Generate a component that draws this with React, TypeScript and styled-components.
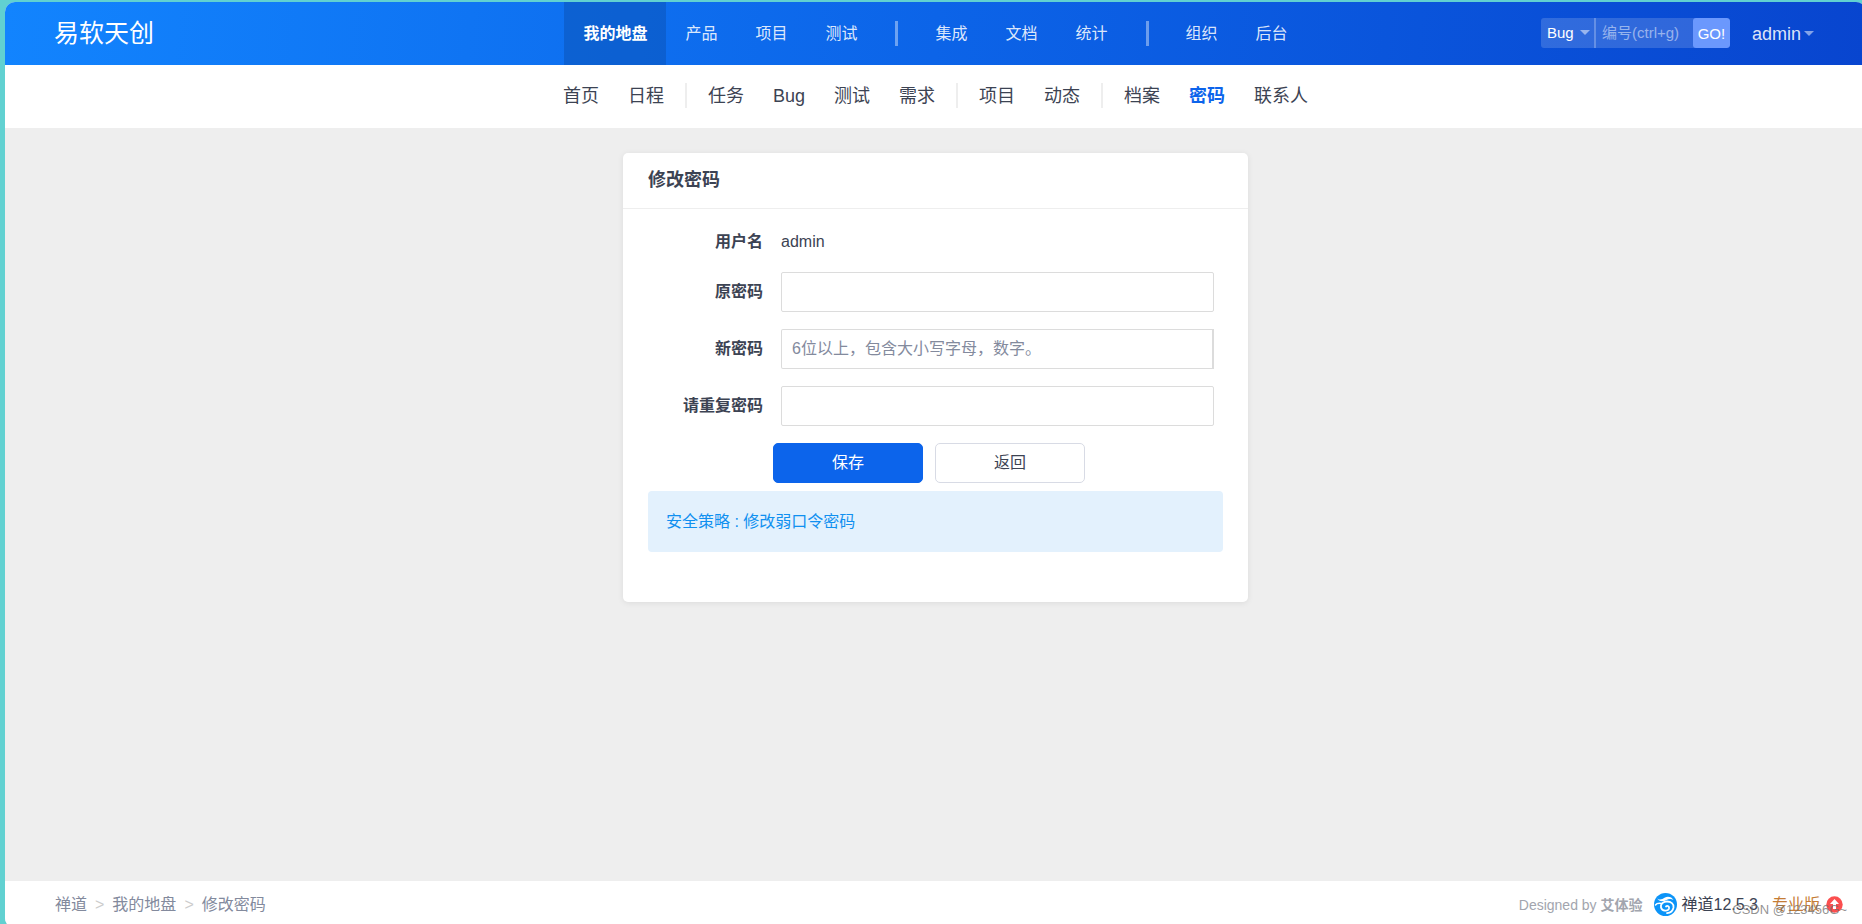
import React from "react";
import styled, { createGlobalStyle, css } from "styled-components";

const GlobalStyle = createGlobalStyle`
  *, *::before, *::after { box-sizing: border-box; }
  body {
    margin: 0;
    background: #61d1d1;
    color: #3c4353;
    font-family: "Liberation Sans", "Noto Sans CJK SC", sans-serif;
    font-size: 16px;
    line-height: 24px;
  }
  a { color: inherit; text-decoration: none; }
  button, input, select { font: inherit; color: inherit; margin: 0; }
`;

const Desktop = styled.div`
  height: 100vh;
  padding: 2px 0 0 5px;
  overflow: hidden;
`;

const Window = styled.div`
  display: flex;
  flex-direction: column;
  height: calc(100vh + 2px);
  margin-right: -4px;
  border-radius: 10px;
  overflow: hidden;
  background: #eee;
`;

const Header = styled.header`
  display: grid;
  grid-template-columns: 1fr auto 1fr;
  flex: none;
  height: 63px;
  color: #fff;
  background: linear-gradient(95deg, #1284fe 0%, #0c64e8 50%, #0845cf 100%);
`;

const Company = styled.h1`
  margin: 0;
  padding-left: 49px;
  font-size: 25px;
  font-weight: 400;
  line-height: 63px;
`;

const MainNav = styled.nav`
  display: flex;
  align-items: center;
`;

const MainLink = styled.a<{ $active?: boolean }>`
  padding: 0 19px;
  line-height: 63px;
  color: rgba(255, 255, 255, 0.87);
  ${(p) =>
    p.$active &&
    css`
      color: #fff;
      font-weight: 700;
      background: rgba(11, 87, 190, 0.6);
    `}
`;

const MainDivider = styled.span`
  width: 3px;
  height: 25px;
  margin: 0 18px 0 19px;
  background: rgba(255, 255, 255, 0.4);
`;

const Tools = styled.div`
  display: flex;
  justify-content: flex-end;
  align-items: center;
  gap: 22px;
  padding: 0 52px 2px 0;
`;

const Search = styled.form`
  display: flex;
  height: 30px;
  font-size: 15px;
  border-radius: 3px;
  overflow: hidden;
  background: rgba(255, 255, 255, 0.16);
`;

const TypePicker = styled.label`
  display: flex;
  align-items: center;
  width: 55px;
  padding-right: 4px;
  border-right: 2px solid rgba(255, 255, 255, 0.25);
`;

const TypeSelect = styled.select`
  appearance: none;
  flex: 1;
  min-width: 0;
  height: 30px;
  padding: 0 0 0 6px;
  border: 0;
  outline: 0;
  background: transparent;
  option { color: #3c4353; }
`;

const Caret = styled.span`
  flex: none;
  border: 5px solid transparent;
  border-top-color: rgba(255, 255, 255, 0.5);
  border-bottom: 0;
`;

const SearchInput = styled.input`
  width: 97px;
  padding: 0 6px;
  border: 0;
  outline: 0;
  background: transparent;
  &::placeholder { color: rgba(255, 255, 255, 0.5); }
`;

const GoButton = styled.button`
  width: 37px;
  padding: 2px 0 0;
  border: 0;
  border-radius: 3px;
  background: #6b98fd;
`;

const UserButton = styled.button`
  display: flex;
  align-items: center;
  gap: 3px;
  padding: 2px 0 0;
  border: 0;
  background: none;
  font-size: 18px;
  color: rgba(255, 255, 255, 0.87);
`;

const SubNav = styled.nav`
  display: flex;
  flex: none;
  justify-content: center;
  align-items: center;
  gap: 21px;
  height: 63px;
  padding-bottom: 2px;
  font-size: 18px;
  background: #fff;
`;

const SubGroup = styled.div`
  display: flex;
  gap: 29px;
`;

const SubLink = styled.a<{ $active?: boolean }>`
  ${(p) =>
    p.$active &&
    css`
      color: #0c64eb;
      font-weight: 700;
    `}
`;

const SubDivider = styled.span`
  width: 2px;
  height: 25px;
  background: #eee;
`;

const Main = styled.main`
  flex: 1;
  padding-top: 25px;
`;

const Card = styled.section`
  max-width: 625px;
  margin: 0 auto;
  padding-bottom: 50px;
  border-radius: 5px;
  background: #fff;
  box-shadow: 0 1px 6px rgba(0, 0, 0, 0.08);
`;

const CardTitle = styled.h2`
  margin: 0;
  padding: 0 25px;
  border-bottom: 1px solid #eee;
  font-size: 18px;
  line-height: 55px;
`;

const Form = styled.form`
  display: flex;
  flex-direction: column;
  gap: 17px;
  padding: 20px 34px 8px 25px;
`;

const Row = styled.div`
  display: flex;
  align-items: center;
  gap: 18px;
`;

const Label = styled.label`
  flex: none;
  width: 115px;
  text-align: right;
  font-weight: 700;
`;

const UserName = styled.output`
  line-height: 26px;
`;

const TextInput = styled.input`
  flex: 1;
  min-width: 0;
  height: 40px;
  padding: 0 10px;
  border: 1px solid #dcdcdc;
  border-radius: 2px;
  outline: 0;
  background: #fff;
  &::placeholder { color: #838a9d; opacity: 1; }
`;

const StrengthInput = styled(TextInput)`
  border-right-width: 2px;
  border-radius: 2px 0 0 2px;
`;

const Actions = styled.div`
  display: flex;
  gap: 12px;
  padding-left: 125px;
`;

const Button = styled.button<{ $primary?: boolean }>`
  width: 150px;
  height: 40px;
  padding: 0;
  border: 1px solid ${(p) => (p.$primary ? "#0c64eb" : "#d8dbe5")};
  border-radius: 5px;
  color: ${(p) => (p.$primary ? "#fff" : "#3c4353")};
  background: ${(p) => (p.$primary ? "#0c64eb" : "#fff")};
`;

const Notice = styled.p`
  margin: 0 25px;
  padding: 18px;
  border-radius: 4px;
  line-height: 25px;
  color: #1090f0;
  background: #e3f1fd;
`;

const Footer = styled.footer`
  display: flex;
  flex: none;
  justify-content: space-between;
  align-items: center;
  height: 47px;
  padding: 0 23px 0 50px;
  background: #fff;
`;

const Breadcrumb = styled.nav`
  display: flex;
  gap: 8px;
  color: #838a9d;
`;

const Arrow = styled.span`
  color: #ccc;
`;

const Credits = styled.div`
  position: relative;
  display: flex;
  align-items: center;
`;

const Designer = styled.span`
  margin-right: 12px;
  font-size: 14px;
  color: #a2a5ae;
`;

const Version = styled.a`
  display: flex;
  align-items: center;
  gap: 4px;
  margin-right: 14px;
`;

const ProLink = styled.a`
  display: flex;
  align-items: center;
  gap: 6px;
  color: #c57c35;
`;

const Watermark = styled.span`
  position: absolute;
  right: -4px;
  bottom: -5px;
  font-size: 13px;
  white-space: nowrap;
  color: rgba(110, 110, 110, 0.75);
`;

const mainGroups = [
  ["我的地盘", "产品", "项目", "测试"],
  ["集成", "文档", "统计"],
  ["组织", "后台"],
];

const subGroups = [
  ["首页", "日程"],
  ["任务", "Bug", "测试", "需求"],
  ["项目", "动态"],
  ["档案", "密码", "联系人"],
];

const ZentaoLogo = () => (
  <svg width="23" height="23" viewBox="0 0 23 23" aria-hidden="true">
    <circle cx="11.5" cy="11.5" r="11.5" fill="#0c94f8" />
    <path
      d="M3 5C5 7.500 8 6.500 11 4.500C14 2.800 18 4 19.500 7C17 5.500 14.500 6 12.500 7C9 8.800 5 9 3 5Z"
      fill="#fff"
    />
    <g fill="none" stroke="#fff" strokeLinecap="round">
      <path d="M1.500 12C3 9.800 5.500 10.200 7.500 10.500" strokeWidth="1.500" />
      <path
        d="M12 13.500C13.500 12.200 15.500 13.500 15 15.500C14 18.500 8 18.500 7 14.500C6.200 11 9.500 8.500 13 8.500C17 8.500 20 11 19.500 14.500C19 17.500 16.500 19.800 13 20.200"
        strokeWidth="1.800"
      />
    </g>
  </svg>
);

const UpgradeIcon = () => (
  <svg width="17" height="17" viewBox="0 0 17 17" aria-hidden="true">
    <circle cx="8.5" cy="8.5" r="8.2" fill="#fb4f4f" />
    <path d="M8.500 3L13 8H10V13H7V8H4Z" fill="#fff" />
  </svg>
);

export default function App() {
  return (
    <Desktop>
      <GlobalStyle />
      <Window>
        <Header>
          <Company>易软天创</Company>
          <MainNav>
            {mainGroups.map((group, i) => (
              <React.Fragment key={i}>
                {i > 0 && <MainDivider />}
                {group.map((name) => (
                  <MainLink key={name} href="#" $active={name === "我的地盘"}>
                    {name}
                  </MainLink>
                ))}
              </React.Fragment>
            ))}
          </MainNav>
          <Tools>
            <Search>
              <TypePicker>
                <TypeSelect aria-label="类型">
                  <option>Bug</option>
                </TypeSelect>
                <Caret />
              </TypePicker>
              <SearchInput aria-label="编号" placeholder="编号(ctrl+g)" />
              <GoButton type="button">GO!</GoButton>
            </Search>
            <UserButton type="button">
              admin
              <Caret />
            </UserButton>
          </Tools>
        </Header>
        <SubNav>
          {subGroups.map((group, i) => (
            <React.Fragment key={i}>
              {i > 0 && <SubDivider />}
              <SubGroup>
                {group.map((name) => (
                  <SubLink key={name} href="#" $active={name === "密码"}>
                    {name}
                  </SubLink>
                ))}
              </SubGroup>
            </React.Fragment>
          ))}
        </SubNav>
        <Main>
          <Card>
            <CardTitle>修改密码</CardTitle>
            <Form>
              <Row>
                <Label htmlFor="account">用户名</Label>
                <UserName id="account">admin</UserName>
              </Row>
              <Row>
                <Label htmlFor="original">原密码</Label>
                <TextInput id="original" type="password" />
              </Row>
              <Row>
                <Label htmlFor="password1">新密码</Label>
                <StrengthInput
                  id="password1"
                  type="password"
                  placeholder="6位以上，包含大小写字母，数字。"
                />
              </Row>
              <Row>
                <Label htmlFor="password2">请重复密码</Label>
                <TextInput id="password2" type="password" />
              </Row>
              <Actions>
                <Button type="button" $primary>
                  保存
                </Button>
                <Button type="button">返回</Button>
              </Actions>
            </Form>
            <Notice>安全策略 : 修改弱口令密码</Notice>
          </Card>
        </Main>
        <Footer>
          <Breadcrumb>
            <a href="#">禅道</a>
            <Arrow>&gt;</Arrow>
            <a href="#">我的地盘</a>
            <Arrow>&gt;</Arrow>
            <span>修改密码</span>
          </Breadcrumb>
          <Credits>
            <Designer>
              Designed by <b>艾体验</b>
            </Designer>
            <Version href="#">
              <ZentaoLogo />
              禅道12.5.3
            </Version>
            <ProLink href="#">
              专业版
              <UpgradeIcon />
            </ProLink>
            <Watermark>CSDN @123456G~</Watermark>
          </Credits>
        </Footer>
      </Window>
    </Desktop>
  );
}
